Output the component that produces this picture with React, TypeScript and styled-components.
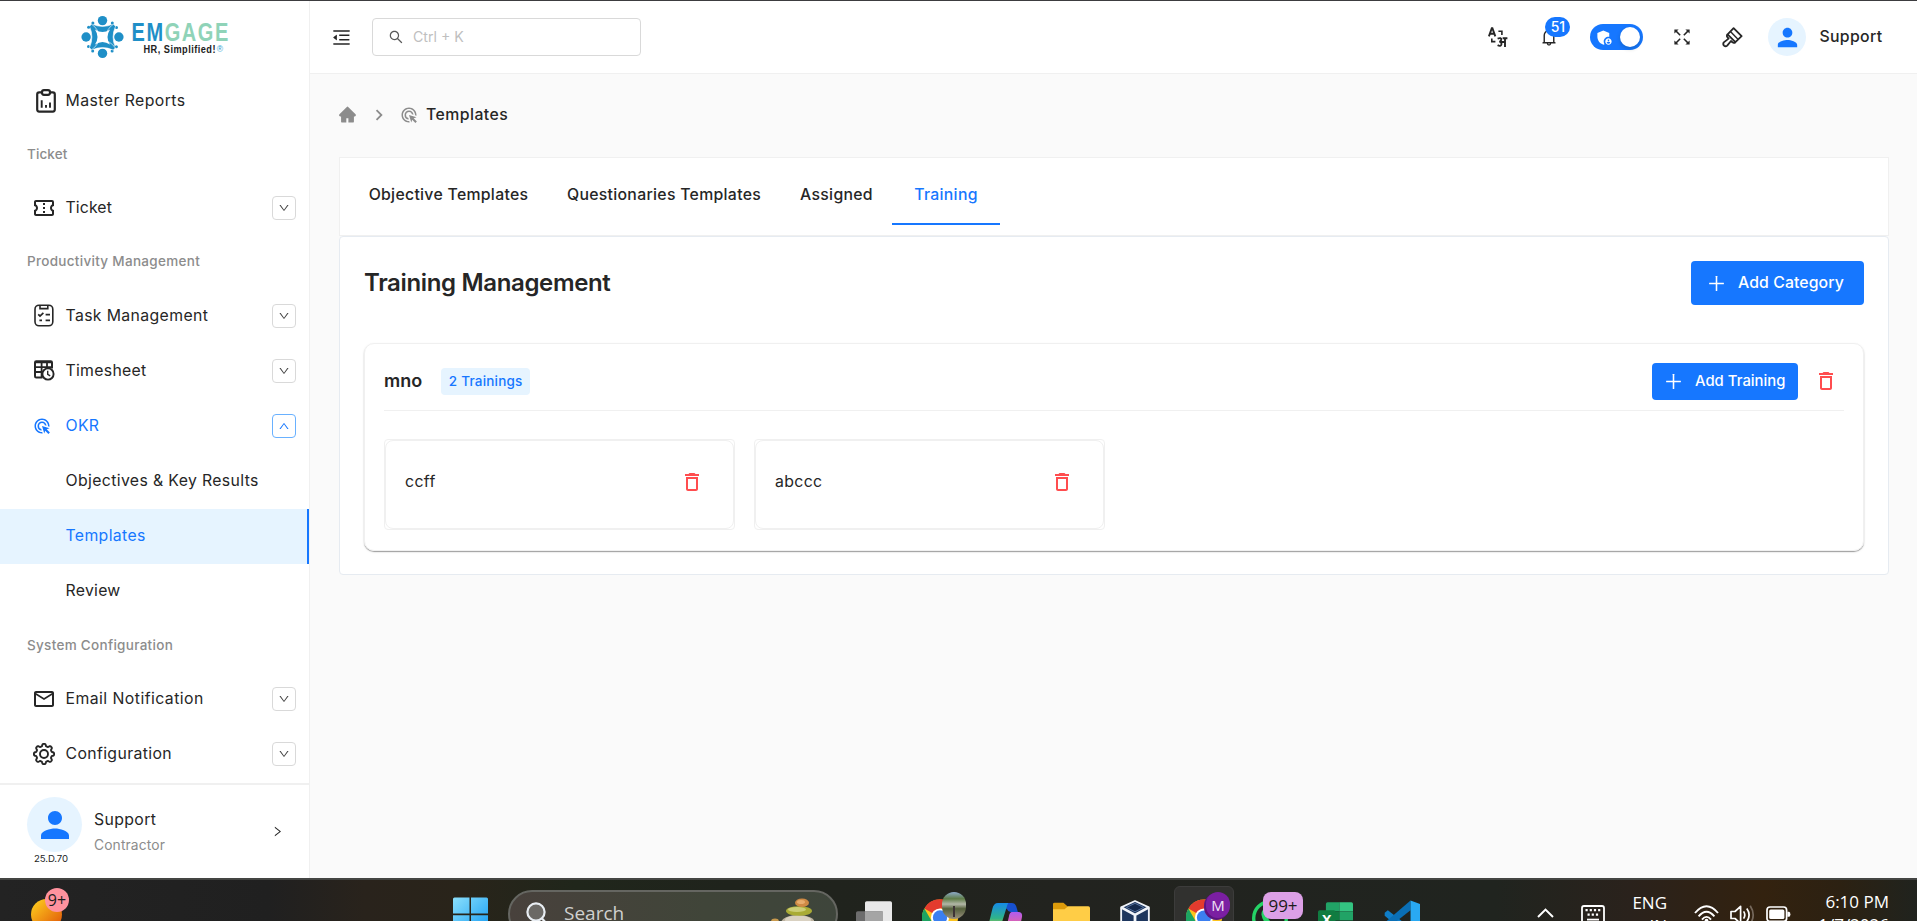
import React from "react";
import styled, { createGlobalStyle, css } from "styled-components";
import {
  AiFillHome,
  AiOutlineBell,
  AiOutlineDown,
  AiOutlineMenuFold,
  AiOutlinePlus,
  AiOutlineRight,
  AiOutlineSearch,
  AiOutlineUp,
} from "react-icons/ai";
import {
  MdAdminPanelSettings,
  MdAdsClick,
  MdChevronRight,
  MdDeleteOutline,
  MdMailOutline,
  MdOutlineConfirmationNumber,
  MdPerson,
} from "react-icons/md";

const blue = "#1677ff";
const ink = "#262626";
const muted = "#8c8c8c";
const line = "#f0f0f0";
const pale = "#e6f4ff";

const GlobalStyle = createGlobalStyle`
  *, *::before, *::after { box-sizing: border-box; }
  html, body { margin: 0; padding: 0; overflow: hidden; }
  body {
    font-family: Inter, "Public Sans", Roboto, sans-serif;
    font-size: 15.8px;
    color: ${ink};
    background: #fafafa;
  }
  svg { display: block; flex: none; }
`;

const Screen = styled.div`
  width: 1917px;
  height: 921px;
  display: flex;
  flex-direction: column;
  border-top: 1px solid #3c3c3f;
  overflow: hidden;
`;

const Main = styled.div`
  flex: none;
  height: 877px;
  display: flex;
`;

const Label = styled.span<{ $size?: number; $track?: number; $weight?: number; $color?: string }>`
  padding-bottom: 1px;
  font-size: ${(p) => p.$size ?? 15.8}px;
  letter-spacing: ${(p) => p.$track ?? 0.37}px;
  font-weight: ${(p) => p.$weight ?? 400};
  color: ${(p) => p.$color ?? "inherit"};
  white-space: nowrap;
`;

/* ---------- Sidebar ---------- */

const Sidebar = styled.aside`
  flex: none;
  width: 310px;
  border-right: 1px solid ${line};
  background: #fff;
  display: flex;
  flex-direction: column;
`;

const LogoArea = styled.div`
  height: 72.2px;
  padding: 11px 0 0 78px;
`;

const NavItem = styled.div<{ $active?: boolean; $child?: boolean; $current?: boolean }>`
  height: 55.2px;
  display: flex;
  align-items: center;
  padding: 0 13px 0 ${(p) => (p.$child ? 65.5 : 32)}px;
  color: ${(p) => (p.$active ? blue : ink)};
  ${(p) =>
    p.$current &&
    css`
      background: ${pale};
      border-right: 2px solid ${blue};
    `}
`;

const NavIcon = styled.span<{ $indent?: number }>`
  width: 33.5px;
  padding-left: ${(p) => p.$indent ?? 0}px;
  display: flex;
`;

const NavSection = styled.div`
  height: 52.2px;
  display: flex;
  align-items: center;
  padding-left: 27px;
  color: ${muted};
`;

const Expander = styled.span<{ $open?: boolean }>`
  margin-left: auto;
  width: 24px;
  height: 24px;
  display: flex;
  align-items: center;
  justify-content: center;
  border: 1px solid ${(p) => (p.$open ? "#69b1ff" : "#d9d9d9")};
  border-radius: 4px;
  background: #fff;
  color: ${(p) => (p.$open ? blue : "#434343")};
`;

const Profile = styled.div`
  margin-top: auto;
  height: 95px;
  border-top: 2px solid ${line};
  padding: 12px 25px 0 27px;
  display: flex;
`;

const AvatarColumn = styled.div`
  width: 55px;
  display: flex;
  flex-direction: column;
  align-items: flex-start;
`;

const Version = styled.span`
  margin: 1px 0 0 7px;
  font-size: 9.6px;
  letter-spacing: -0.1px;
  white-space: nowrap;
`;

const Avatar = styled.span<{ $size: number }>`
  flex: none;
  width: ${(p) => p.$size}px;
  height: ${(p) => p.$size}px;
  border-radius: 50%;
  background: ${pale};
  color: ${blue};
  display: flex;
  align-items: center;
  justify-content: center;
`;

const ProfileText = styled.div`
  flex: 1;
  padding: 13px 0 0 12px;
  display: flex;
  flex-direction: column;
  gap: 4px;
  line-height: 20px;
`;

const ProfileArrow = styled.div`
  padding-top: 27.5px;
`;

/* ---------- Header ---------- */

const Content = styled.div`
  flex: 1;
  display: flex;
  flex-direction: column;
`;

const Header = styled.header`
  height: 73px;
  background: #fff;
  border-bottom: 1px solid ${line};
  display: flex;
  align-items: center;
  padding: 0 34.5px 0 21px;
`;

const SearchBox = styled.div`
  margin-left: 20px;
  width: 269px;
  height: 38px;
  border: 1px solid #d9d9d9;
  border-radius: 4px;
  display: flex;
  align-items: center;
  padding-left: 15px;
  gap: 9px;
  color: #595959;
`;

const HeaderTools = styled.div`
  margin-left: auto;
  display: flex;
  align-items: center;
`;

const Tool = styled.span<{ $gap?: number }>`
  position: relative;
  margin-left: ${(p) => p.$gap ?? 0}px;
  display: flex;
`;

const Count = styled.span`
  position: absolute;
  left: 6px;
  top: -10.5px;
  width: 25px;
  height: 20px;
  border-radius: 10px;
  background: ${blue};
  color: #fff;
  font-size: 14px;
  font-weight: 500;
  line-height: 20px;
  text-align: center;
`;

const Toggle = styled.span`
  margin-left: 31px;
  width: 53px;
  height: 26px;
  border-radius: 13px;
  background: ${blue};
  color: #fff;
  display: flex;
  align-items: center;
  justify-content: space-between;
  padding: 0 3px 0 5px;
`;

const Knob = styled.span`
  width: 20px;
  height: 20px;
  border-radius: 50%;
  background: #fff;
  box-shadow: 0 2px 4px rgba(0, 35, 11, 0.2);
`;

/* ---------- Page ---------- */

const Page = styled.main`
  padding: 0 28px 0 29px;
`;

const Breadcrumb = styled.nav`
  height: 83px;
  padding-bottom: 2px;
  margin-left: -1px;
  display: flex;
  align-items: center;
  color: ${muted};
`;

const Tabs = styled.div`
  height: 79px;
  background: #fff;
  border: 1px solid ${line};
  display: flex;
  align-items: flex-start;
  padding: 9px 0 0 10px;
`;

const Tab = styled.div<{ $active?: boolean; $width: number }>`
  width: ${(p) => p.$width}px;
  height: 58px;
  display: flex;
  align-items: center;
  justify-content: center;
  color: ${(p) => (p.$active ? blue : "inherit")};
  border-bottom: 2px solid ${(p) => (p.$active ? blue : "transparent")};
`;

const Panel = styled.section`
  height: 339px;
  background: #fff;
  border: 1px solid #e6ebf1;
  border-radius: 4px;
  padding: 24px 24px 0 24px;
`;

const PanelHead = styled.div`
  height: 44px;
  display: flex;
  align-items: center;
  justify-content: space-between;
`;

const Button = styled.button<{ $small?: boolean }>`
  width: ${(p) => (p.$small ? 146 : 173)}px;
  height: ${(p) => (p.$small ? 37 : 44)}px;
  padding: 0 0 0 ${(p) => (p.$small ? 11 : 15)}px;
  border: 0;
  border-radius: 4px;
  background: ${blue};
  color: #fff;
  font-family: inherit;
  display: flex;
  align-items: center;
  gap: 11px;
`;

const Category = styled.div`
  margin-top: 38px;
  height: 208px;
  border: 1px solid ${line};
  border-radius: 10px;
  padding: 0 19px;
  box-shadow: 0 1px 1px rgba(0, 0, 0, 0.35), 0 1px 3px rgba(0, 0, 0, 0.08);
`;

const CategoryHead = styled.div`
  height: 67px;
  padding: 8px 6px 0 0;
  border-bottom: 1px solid ${line};
  display: flex;
  align-items: center;
`;

const Chip = styled.span`
  margin-left: 19px;
  width: 89px;
  height: 27px;
  border-radius: 4px;
  background: ${pale};
  display: flex;
  align-items: center;
  justify-content: center;
  color: ${blue};
`;

const CategoryActions = styled.div`
  margin-left: auto;
  display: flex;
  align-items: center;
  gap: 16px;
  color: #ff4d4f;
`;

const Trainings = styled.div`
  display: flex;
  gap: 19px;
  padding-top: 28px;
`;

const TrainingFrame = styled.div`
  width: 351px;
  height: 91px;
  border: 1px solid ${line};
  border-radius: 4px;
`;

const TrainingCard = styled.div`
  height: 100%;
  border: 1px solid ${line};
  border-radius: 8px;
  padding: 0 29px 5px 19px;
  display: flex;
  align-items: center;
  justify-content: space-between;
`;

const Danger = styled.span`
  color: #ff4d4f;
`;

/* ---------- Taskbar ---------- */

const Taskbar = styled.footer`
  flex: none;
  height: 43px;
  border-top: 2px solid #444543;
  background: linear-gradient(90deg, #232323 0%, #202020 14%, #29231c 19%, #29241a 24%, #20261b 30%, #1f231c 38%, #22231f 55%, #20241f 78%, #2a221c 85%, #33220f 92%, #2c2112 96%, #20231e 100%);
  display: flex;
  align-items: flex-start;
  overflow: hidden;
  font-family: "Open Sans", "Noto Sans", sans-serif;
  color: #fff;
`;

const TaskItem = styled.span<{ $gap: number; $width: number; $large?: boolean }>`
  position: relative;
  flex: none;
  margin-left: ${(p) => p.$gap}px;
  width: ${(p) => p.$width}px;
  height: 41px;
  ${(p) =>
    p.$large &&
    css`
      > svg {
        width: 100%;
        height: auto;
        margin-top: 2px;
      }
    `}
`;

const TaskBadge = styled.span<{ $left: number; $top: number; $width: number; $height: number; $bg: string; $fg: string; $size: number }>`
  position: absolute;
  top: ${(p) => p.$top}px;
  left: ${(p) => p.$left}px;
  width: ${(p) => p.$width}px;
  height: ${(p) => p.$height}px;
  border-radius: ${(p) => (p.$width > 30 ? 8 : 14)}px;
  background: ${(p) => p.$bg};
  color: ${(p) => p.$fg};
  font-size: ${(p) => p.$size}px;
  line-height: ${(p) => p.$height}px;
  text-align: center;
`;

const SearchPill = styled.div`
  flex: none;
  margin: 10px 0 0 20px;
  width: 330px;
  height: 48px;
  border: 2px solid #656661;
  border-radius: 24px;
  background: linear-gradient(90deg, #48413c, #404539 60%, #3e453b);
  display: flex;
  align-items: flex-start;
  padding: 6px 22px 0 16px;
`;

const SearchText = styled.span`
  margin: 3px auto 0 16px;
  font-size: 19px;
  line-height: 24px;
  color: #d0d1cf;
`;

const ActiveTile = styled.span`
  flex: none;
  margin: 6px 0 0 24px;
  width: 60px;
  height: 60px;
  border: 1px solid #3c3c3b;
  border-radius: 6px;
  background: #31312f;
  display: flex;
`;

const TrayText = styled.div<{ $gap: number; $width: number; $top: number }>`
  flex: none;
  margin: ${(p) => p.$top}px 0 0 ${(p) => p.$gap}px;
  width: ${(p) => p.$width}px;
  display: flex;
  flex-direction: column;
  align-items: flex-end;
  font-size: 17px;
  line-height: 23px;
  white-space: nowrap;
`;

/* ---------- Drawings ---------- */

const Logo = () => (
  <svg width="152" height="50" viewBox="78 12 152 50">
    <g transform="translate(102.5 37)" fill="#1f8fc7">
      {[0, 90, 180, 270].map((a) => (
        <g key={a} transform={`rotate(${a})`}>
          <circle cx="0" cy="-16.4" r="4.7" />
          <path d="M-10.6 -13 Q-5.5 -10.6 0 -10.6 Q5.5 -10.6 10.6 -13 L12.8 -11 Q8 -3.6 0 -3.6 Q-8 -3.6 -12.8 -11Z" stroke="#fff" strokeWidth=".6" />
          <circle cx="9.8" cy="-13.9" r="1.5" />
          <circle cx="14" cy="-9.6" r="1.5" />
        </g>
      ))}
      <path d="M-7.5 -7.5 Q0 -2.5 7.5 -7.5 Q2.5 0 7.5 7.5 Q0 2.5 -7.5 7.5 Q-2.5 0 -7.5 -7.5Z" fill="#fff" />
    </g>
    <g fontFamily="Liberation Sans, sans-serif" fontWeight="700">
      <text transform="translate(131.5 41) scale(.8 1)" fontSize="25" textLength="121" lengthAdjust="spacing">
        <tspan fill="#1f8fc7">EM</tspan>
        <tspan fill="#8fd3b8">GAGE</tspan>
      </text>
      <text transform="translate(143.5 52.6) scale(.8 1)" fontSize="11.5" fill="#222" textLength="90" lengthAdjust="spacing">
        HR, Simplified!
      </text>
    </g>
    <text x="216.8" y="52" fontFamily="Liberation Sans, sans-serif" fontSize="8.5" fill="#2f9fd0">®</text>
  </svg>
);

const ReportsIcon = () => (
  <svg width="20" height="24" viewBox="0 0 20 24" fill="none" stroke={ink} strokeWidth="2.2">
    <path d="M6 3.4H3.2Q1.2 3.4 1.2 5.4V20.6Q1.2 22.6 3.2 22.6H16.8Q18.8 22.6 18.8 20.6V5.4Q18.8 3.4 16.8 3.4H14" />
    <rect x="6" y="1.2" width="8" height="4.6" rx="2" />
    <path d="M5.7 11.2V18.8M10 16V18.8M14 13.6V18.8" strokeWidth="1.9" />
  </svg>
);

const TaskIcon = () => (
  <svg width="20" height="23" viewBox="0 0 20 23" fill="none" stroke={ink} strokeWidth="1.6">
    <rect x="1" y="1.2" width="17.8" height="20.6" rx="4" />
    <path d="M6 1.2V4.6H13.8V1.2" />
    <path d="M4.2 10.4L6 12L9.4 8.8M11.6 10.6H16M5.4 16.4H8M11.6 16.4H16" strokeWidth="1.7" />
  </svg>
);

const TimesheetIcon = () => (
  <svg width="21" height="21" viewBox="0 0 21 21" fill="none" stroke={ink} strokeWidth="2">
    <path d="M8.5 17.5H2.2Q1 17.5 1 16.3V2.5Q1 1.3 2.2 1.3H16.8Q18 1.3 18 2.5V8.5" />
    <path d="M1 2.4H18M1 7.2H18M1 12H9M7.6 2V18M13 2V8" strokeWidth="1.8" />
    <circle cx="14" cy="14" r="5.6" fill="#fff" strokeWidth="1.9" />
    <path d="M13.7 10.8V14.4L16.2 15.8" strokeWidth="1.4" />
  </svg>
);

const gearPath = (() => {
  const pts: string[] = [];
  for (let i = 0; i <= 160; i++) {
    const a = (i / 160) * Math.PI * 2;
    const wave = Math.tanh(2.2 * Math.cos(8 * a));
    const r = 9 + 1.15 * wave;
    pts.push(`${(11 + r * Math.cos(a)).toFixed(2)} ${(11 + r * Math.sin(a)).toFixed(2)}`);
  }
  return `M${pts.join("L")}Z`;
})();

const GearIcon = () => (
  <svg width="22" height="22" viewBox="0 0 22 22" fill="none" stroke={ink} strokeWidth="1.9" strokeLinejoin="round">
    <path d={gearPath} />
    <circle cx="11" cy="11" r="4" />
  </svg>
);

const TranslateIcon = () => (
  <svg width="20" height="21" viewBox="0 0 20 21" fill="none" stroke={ink} strokeWidth="1.7">
    <path d="M.9 9.4L3.8 1.2H4.4L7.3 9.4M2 6.8H6.2" strokeWidth="1.9" />
    <path d="M10.4 4.3H13.9V8M3.8 11.5V14.6H7.4" strokeWidth="1.6" />
    <path d="M9.6 11.6Q13.6 10.2 13.2 12.8Q13 14.5 11.2 14.6Q13.8 14.8 13.4 17.2Q12.8 20 9.6 18.2M13.4 15H17M17 11V20M14.6 11.2H19.4" strokeWidth="1.9" />
  </svg>
);

const FullscreenIcon = () => (
  <svg width="16" height="16" viewBox="0 0 16 16" stroke={ink} strokeWidth="1.5" fill={ink}>
    {[0, 90, 180, 270].map((a) => (
      <g key={a} transform={`rotate(${a} 8 8)`}>
        <path d="M1.6 1.6L6.2 6.2" />
        <path d="M.4 .4H4.6L.4 4.6Z" stroke="none" />
      </g>
    ))}
  </svg>
);

const BrushIcon = () => (
  <svg width="21" height="21" viewBox="0 0 21 21" fill="none" stroke={ink} strokeWidth="1.8" strokeLinejoin="round">
    <path d="M11.6 1.2L19.6 9.2L13.4 15.2L5.6 7.4Z" />
    <path d="M8.4 4.6L16.2 12.4" strokeWidth="1.4" />
    <path d="M5.6 7.4Q4.2 9 5.6 10.4L6.6 11.6L1.8 15.4Q.6 17 2 18.6Q3.6 20 5.2 18.6L9 14L10.4 15.2Q11.8 16.6 13.4 15.2" />
  </svg>
);

const WeatherIcon = () => (
  <svg width="40" height="41" viewBox="0 0 40 41">
    <defs>
      <linearGradient id="sun" x1="0" y1="0" x2="1" y2="1">
        <stop offset="0" stopColor="#ffd51f" />
        <stop offset=".8" stopColor="#e5690c" />
      </linearGradient>
    </defs>
    <circle cx="15.5" cy="34.5" r="15.5" fill="url(#sun)" />
  </svg>
);

const WindowsIcon = () => (
  <svg width="35" height="41" viewBox="0 0 35 41">
    <defs>
      <linearGradient id="win" x1="0" y1="0" x2="1" y2="1">
        <stop offset="0" stopColor="#8be0fc" />
        <stop offset="1" stopColor="#149bf3" />
      </linearGradient>
    </defs>
    <path d="M1.5 17.5H16.5V33.5H0V19Q0 17.5 1.5 17.5ZM18 17.5H33.5Q35 17.5 35 19V33.5H18ZM0 35.2H16.5V52H0ZM18 35.2H35V52H18Z" fill="url(#win)" />
  </svg>
);

const PebblesIcon = () => (
  <svg width="46" height="31" viewBox="0 0 46 31">
    <ellipse cx="7" cy="24" rx="4" ry="3.4" fill="#c99a4e" />
    <ellipse cx="30" cy="25" rx="17" ry="8" fill="#bdb3a0" />
    <ellipse cx="30" cy="22" rx="13" ry="4.5" fill="#d9d1c1" />
    <ellipse cx="31" cy="13" rx="13" ry="4.8" fill="#a9ab35" />
    <ellipse cx="29" cy="11.5" rx="9" ry="2.6" fill="#ccce77" />
    <ellipse cx="34" cy="4.8" rx="7" ry="4.3" fill="#cf8a45" />
    <ellipse cx="33" cy="4" rx="4" ry="2" fill="#e7ac6d" />
  </svg>
);

const TaskViewIcon = () => (
  <svg width="32" height="41" viewBox="0 0 32 41">
    <rect x="8" y="17" width="24" height="32" rx="1.5" fill="#e9e9e9" />
    <rect x="0" y="26" width="24" height="24" rx="1.5" fill="#6d6d6d" />
    <rect x="8" y="26" width="16" height="20" fill="#a5a5a5" />
  </svg>
);

const ChromeIcon = ({ offset = 0 }: { offset?: number }) => (
  <svg width="32" height="41" viewBox={`0 ${offset} 32 41`}>
    <circle cx="16" cy="31.5" r="16" fill="#fcc31e" />
    <path d="M16 31.5L2.1 23.5A16 16 0 0 1 29.9 23.5H16Z" fill="#e33b2e" />
    <path d="M2.1 23.5A16 16 0 0 0 16 47.5L23 35.5L9 35.5Z" fill="#1da462" />
    <circle cx="16" cy="31.5" r="8" fill="#fff" />
    <circle cx="16" cy="31.5" r="6.3" fill="#3b7ff0" />
  </svg>
);

const PhotoBadge = styled.span`
  position: absolute;
  left: 20px;
  top: 12px;
  width: 24px;
  height: 27px;
  border-radius: 12px;
  background:
    linear-gradient(90deg, transparent 44%, #3e3436 44%, #3e3436 56%, transparent 56%) 0 14px / 100% 11px no-repeat,
    linear-gradient(180deg, #8daac9 0%, #5f7d48 25%, #b3b7a8 45%, #55603c 62%, #99907f 100%);
`;

const CopilotIcon = () => (
  <svg width="30" height="41" viewBox="0 0 30 41">
    <defs>
      <linearGradient id="cpa" x1="0" y1="0" x2="0" y2="1">
        <stop offset="0" stopColor="#168be8" />
        <stop offset=".6" stopColor="#2fb489" />
        <stop offset="1" stopColor="#e8ca27" />
      </linearGradient>
      <linearGradient id="cpb" x1="0" y1="0" x2="0" y2="1">
        <stop offset="0" stopColor="#b15cf0" />
        <stop offset="1" stopColor="#f4678c" />
      </linearGradient>
    </defs>
    <path d="M8 18.5H20Q23 18.5 24 21.5L25.5 26.5H20Q17 27 16 24Z" fill="#1750cf" />
    <path d="M8 18.5H17Q16 20 15 24L11 37Q10 41 7 41H3Q-1 41 0 36L3 23.5Q4 18.5 8 18.5Z" fill="url(#cpa)" />
    <path d="M20 26.5H26Q30 26.5 29 31.5L27 41H15L17.5 31Q18 27 20 26.5Z" fill="url(#cpb)" />
  </svg>
);

const ExplorerIcon = () => (
  <svg width="32" height="41" viewBox="0 0 32 41">
    <path d="M0 19Q0 18 1.4 18H9L13 21.5V26H0Z" fill="#dd9b0b" />
    <path d="M0 23.5H10L13 21H30.5Q32 21 32 22.5V45H0Z" fill="#ffcd46" />
    <path d="M6 41Q6 39 9 39H23Q26 39 26 41V45H6Z" fill="#1583d2" />
  </svg>
);

const BoxIcon = () => (
  <svg width="26" height="41" viewBox="0 0 26 41" strokeLinejoin="round">
    <path d="M13 16.5L25 22V37L13 44L1 37V22Z" fill="#1d365e" stroke="#f0f4fa" strokeWidth="1.6" />
    <path d="M1 22L13 28.5L25 22M13 28.5V44" fill="none" stroke="#f0f4fa" strokeWidth="2.4" />
    <path d="M13 18.5L20.5 22L13 25.8L5.5 22Z" fill="#152a4d" stroke="#6f8db9" strokeWidth=".6" />
  </svg>
);

const WhatsappIcon = () => (
  <svg width="32" height="41" viewBox="0 0 32 41" fill="none">
    <circle cx="16" cy="32" r="14.5" stroke="#25d366" strokeWidth="3" />
    <path d="M9.5 25Q12 22.5 13.5 26L14.6 28.4Q13 30.6 13.6 31.4Q16.4 36 20 37.6L22.4 35.2L27 37.6Q26 42 22 42Q10 39 8.4 29Q8.3 26.4 9.5 25Z" fill="#25d366" />
  </svg>
);

const ExcelIcon = () => (
  <svg width="31" height="41" viewBox="0 0 31 41">
    <path d="M7 19.5Q7 18 8.5 18H19V26H7Z" fill="#21a366" />
    <path d="M19 18H29.5Q31 18 31 19.5V26H19Z" fill="#33c481" />
    <path d="M7 26H19V34H7Z" fill="#107c41" />
    <path d="M19 26H31V34H19Z" fill="#21a366" />
    <path d="M7 34H31V45H7Z" fill="#185c37" />
    <rect x="0" y="25" width="15.5" height="20" rx="1.5" fill="#107c41" />
    <text x="3.6" y="38" fontFamily="Open Sans, sans-serif" fontWeight="700" fontSize="12.5" fill="#fff">X</text>
  </svg>
);

const CodeIcon = () => (
  <svg width="32" height="41" viewBox="0 0 32 41">
    <path d="M.6 27.4L3.4 25.2L24 41V46L20 46L.6 30Z" fill="#0f7dc7" />
    <path d="M23.6 16.4V25L4 40.5L.8 38V36Z" fill="#0a6fb5" />
    <path d="M23.6 16.4L32 19.6V45L23.6 47Z" fill="#29a9f2" />
  </svg>
);

const TrayChevron = () => (
  <svg width="17" height="41" viewBox="0 0 17 41" fill="none" stroke="#fff" strokeWidth="2">
    <path d="M1 37L8.5 29.6L16 37" />
  </svg>
);

const KeyboardIcon = () => (
  <svg width="24" height="41" viewBox="0 0 24 41" fill="none" stroke="#fff" strokeWidth="1.8">
    <rect x="1" y="26" width="22" height="18" rx="2" />
    <path d="M4.5 30.2H20M6.5 34.6H18" strokeWidth="2.2" strokeDasharray="2.2 2" />
    <path d="M6 39.6H18" />
  </svg>
);

const WifiIcon = () => (
  <svg width="25" height="41" viewBox="0 0 25 41" fill="none" stroke="#fff" strokeWidth="1.9">
    <path d="M1 33Q12.5 19.5 24 33" />
    <path d="M4.6 36.4Q12.5 27 20.4 36.4" />
    <path d="M8 39.6Q12.5 34.2 17 39.6" />
    <circle cx="12.5" cy="40.6" r="1.9" fill="#fff" stroke="none" />
  </svg>
);

const VolumeIcon = () => (
  <svg width="25" height="41" viewBox="0 0 25 41" fill="none" stroke="#fff" strokeWidth="1.7" strokeLinejoin="round">
    <path d="M1 31.5H5L10.6 26.4V43.6L5 38.5H1Z" />
    <path d="M13.6 31.4Q16 35 13.6 38.6M16.8 28.4Q21.4 35 16.8 41.6" />
    <path d="M20.2 25.8Q26.2 35 20.2 44" stroke="#76695c" />
  </svg>
);

const BatteryIcon = () => (
  <svg width="25" height="41" viewBox="0 0 25 41">
    <rect x="1" y="27" width="19.6" height="14.4" rx="3" fill="none" stroke="#fff" strokeWidth="1.7" />
    <rect x="3.2" y="29.4" width="15.2" height="9.6" rx="1.5" fill="#fff" />
    <path d="M21.4 31.8H23Q24.4 31.8 24.4 34.3Q24.4 36.8 23 36.8H21.4Z" fill="#fff" />
  </svg>
);

/* ---------- Data ---------- */

type Nav =
  | { kind: "section"; text: string; track?: number }
  | { kind: "item"; text: string; track?: number; icon?: React.ReactNode; indent?: number; expand?: "open" | "closed"; active?: boolean; current?: boolean };

const nav: Nav[] = [
  { kind: "item", text: "Master Reports", track: 0.44, icon: <ReportsIcon />, indent: 4 },
  { kind: "section", text: "Ticket", track: 0.1 },
  { kind: "item", text: "Ticket", track: 0.12, icon: <MdOutlineConfirmationNumber size={24} />, expand: "closed" },
  { kind: "section", text: "Productivity Management" },
  { kind: "item", text: "Task Management", icon: <TaskIcon />, indent: 2, expand: "closed" },
  { kind: "item", text: "Timesheet", track: 0.3, icon: <TimesheetIcon />, indent: 2, expand: "closed" },
  { kind: "item", text: "OKR", track: 0.3, icon: <MdAdsClick size={18} />, indent: 1, expand: "open", active: true },
  { kind: "item", text: "Objectives & Key Results" },
  { kind: "item", text: "Templates", active: true, current: true },
  { kind: "item", text: "Review", track: 0.28 },
  { kind: "section", text: "System Configuration" },
  { kind: "item", text: "Email Notification", track: 0.45, icon: <MdMailOutline size={24} />, expand: "closed" },
  { kind: "item", text: "Configuration", icon: <GearIcon />, indent: 1, expand: "closed" },
];

const tabs = [
  { text: "Objective Templates", width: 197 },
  { text: "Questionaries Templates", width: 234 },
  { text: "Assigned", width: 111 },
  { text: "Training", width: 108, active: true },
];

const trainings = ["ccff", "abccc"];

export default function App() {
  return (
    <>
      <GlobalStyle />
      <Screen>
        <Main>
          <Sidebar>
            <LogoArea>
              <Logo />
            </LogoArea>
            {nav.map((n) =>
              n.kind === "section" ? (
                <NavSection key={n.text + "-section"}>
                  <Label $size={13.5} $weight={500} $track={n.track ?? 0.3}>{n.text}</Label>
                </NavSection>
              ) : (
                <NavItem key={n.text} $active={n.active} $current={n.current} $child={!n.icon}>
                  {n.icon && <NavIcon $indent={n.indent}>{n.icon}</NavIcon>}
                  <Label $track={n.track}>{n.text}</Label>
                  {n.expand && (
                    <Expander $open={n.expand === "open"}>
                      {n.expand === "open" ? <AiOutlineUp size={12} /> : <AiOutlineDown size={12} />}
                    </Expander>
                  )}
                </NavItem>
              )
            )}
            <Profile>
              <AvatarColumn>
                <Avatar $size={55}>
                  <MdPerson size={42} />
                </Avatar>
                <Version>25.D.70</Version>
              </AvatarColumn>
              <ProfileText>
                <Label>Support</Label>
                <Label $size={13.8} $track={0.13} $color={muted}>Contractor</Label>
              </ProfileText>
              <ProfileArrow>
                <AiOutlineRight size={13} />
              </ProfileArrow>
            </Profile>
          </Sidebar>

          <Content>
            <Header>
              <AiOutlineMenuFold size={21} />
              <SearchBox>
                <AiOutlineSearch size={16} />
                <Label $size={14.2} $track={0} $color="#bfbfbf">Ctrl + K</Label>
              </SearchBox>
              <HeaderTools>
                <Tool>
                  <TranslateIcon />
                </Tool>
                <Tool $gap={31}>
                  <AiOutlineBell size={20} />
                  <Count>51</Count>
                </Tool>
                <Toggle>
                  <MdAdminPanelSettings size={19} />
                  <Knob />
                </Toggle>
                <Tool $gap={31}>
                  <FullscreenIcon />
                </Tool>
                <Tool $gap={32}>
                  <BrushIcon />
                </Tool>
                <Tool $gap={25}>
                  <Avatar $size={38}>
                    <MdPerson size={29} />
                  </Avatar>
                </Tool>
                <Tool $gap={13}>
                  <Label $weight={500}>Support</Label>
                </Tool>
              </HeaderTools>
            </Header>

            <Page>
              <Breadcrumb>
                <AiFillHome size={19} />
                <Tool $gap={11}>
                  <MdChevronRight size={22} />
                </Tool>
                <Tool $gap={10}>
                  <MdAdsClick size={18} />
                </Tool>
                <Tool $gap={8}>
                  <Label $weight={500} $track={0.45} $color={ink}>Templates</Label>
                </Tool>
              </Breadcrumb>
              <Tabs>
                {tabs.map((t) => (
                  <Tab key={t.text} $active={t.active} $width={t.width}>
                    <Label $weight={500} $track={0.3}>{t.text}</Label>
                  </Tab>
                ))}
              </Tabs>
              <Panel>
                <PanelHead>
                  <Label $size={24} $weight={600} $track={-0.35}>Training Management</Label>
                  <Button>
                    <AiOutlinePlus size={21} />
                    <Label $weight={500} $track={0.1}>Add Category</Label>
                  </Button>
                </PanelHead>
                <Category>
                  <CategoryHead>
                    <Label $size={18} $weight={600} $track={0}>mno</Label>
                    <Chip>
                      <Label $size={13.5} $weight={500} $track={0.2}>2 Trainings</Label>
                    </Chip>
                    <CategoryActions>
                      <Button $small>
                        <AiOutlinePlus size={21} />
                        <Label $size={14.8} $weight={500} $track={0.05}>Add Training</Label>
                      </Button>
                      <MdDeleteOutline size={24} />
                    </CategoryActions>
                  </CategoryHead>
                  <Trainings>
                    {trainings.map((name) => (
                      <TrainingFrame key={name}>
                        <TrainingCard>
                          <Label>{name}</Label>
                          <Danger>
                            <MdDeleteOutline size={24} />
                          </Danger>
                        </TrainingCard>
                      </TrainingFrame>
                    ))}
                  </Trainings>
                </Category>
              </Panel>
            </Page>
          </Content>
        </Main>

        <Taskbar>
          <TaskItem $gap={31} $width={40}>
            <WeatherIcon />
            <TaskBadge $left={14} $top={8} $width={24} $height={24} $bg="#ff929e" $fg="#1c1c1c" $size={16}>9+</TaskBadge>
          </TaskItem>
          <TaskItem $gap={382} $width={35}>
            <WindowsIcon />
          </TaskItem>
          <SearchPill>
            <svg width="22" height="30" viewBox="0 0 22 30" fill="#6b6965" stroke="#e8edf2" strokeWidth="2.2">
              <path d="M16 20.6L22 27" />
              <circle cx="10" cy="14" r="8.6" />
            </svg>
            <SearchText>Search</SearchText>
            <PebblesIcon />
          </SearchPill>
          <TaskItem $large $gap={18} $width={36}>
            <TaskViewIcon />
          </TaskItem>
          <TaskItem $large $gap={30} $width={36}>
            <ChromeIcon />
            <PhotoBadge />
          </TaskItem>
          <TaskItem $large $gap={31} $width={34}>
            <CopilotIcon />
          </TaskItem>
          <TaskItem $large $gap={30} $width={37}>
            <ExplorerIcon />
          </TaskItem>
          <TaskItem $large $gap={30} $width={30}>
            <BoxIcon />
          </TaskItem>
          <ActiveTile>
            <TaskItem $large $gap={11} $width={36}>
              <ChromeIcon offset={6.2} />
              <TaskBadge $left={18} $top={6} $width={25} $height={27} $bg="#5b1580" $fg="#fff" $size={1}> </TaskBadge>
              <TaskBadge $left={20} $top={5} $width={24} $height={26} $bg="#7b1fa2" $fg="#f1e3f7" $size={15}>M</TaskBadge>
            </TaskItem>
          </ActiveTile>
          <TaskItem $large $gap={18} $width={36}>
            <WhatsappIcon />
            <TaskBadge $left={11} $top={12} $width={40} $height={27} $bg="#dca0e6" $fg="#1c1c1c" $size={17}>99+</TaskBadge>
          </TaskItem>
          <TaskItem $large $gap={30} $width={35}>
            <ExcelIcon />
          </TaskItem>
          <TaskItem $large $gap={31} $width={36}>
            <CodeIcon />
          </TaskItem>
          <TaskItem $gap={117} $width={17}>
            <TrayChevron />
          </TaskItem>
          <TaskItem $gap={27} $width={24}>
            <KeyboardIcon />
          </TaskItem>
          <TrayText $gap={28} $width={34} $top={11}>
            <span>ENG</span>
            <span>IN</span>
          </TrayText>
          <TaskItem $gap={27} $width={25}>
            <WifiIcon />
          </TaskItem>
          <TaskItem $gap={11} $width={25}>
            <VolumeIcon />
          </TaskItem>
          <TaskItem $gap={11} $width={25}>
            <BatteryIcon />
          </TaskItem>
          <TrayText $gap={27} $width={71} $top={9.5}>
            <span>6:10 PM</span>
            <span>1/7/2026</span>
          </TrayText>
        </Taskbar>
      </Screen>
    </>
  );
}
